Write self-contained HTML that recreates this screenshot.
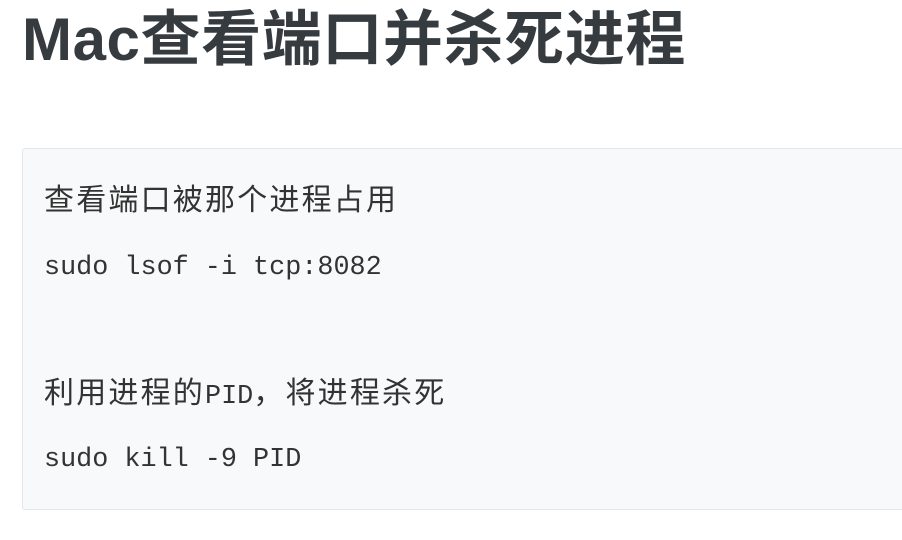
<!DOCTYPE html>
<html><head><meta charset="utf-8"><style>
body{margin:0;width:902px;height:540px;background:#fff;overflow:hidden;position:relative}
h1{position:absolute;left:22px;top:0;margin:0;font:bold 60px/80px "Liberation Sans","Noto Sans CJK SC",sans-serif;color:#363b40;white-space:nowrap;letter-spacing:0.6px}
.box{position:absolute;left:22px;top:148px;width:900px;height:360px;background:#f8f9fa;border:1px solid #e4e7ea;border-radius:3px}
.l{position:absolute;left:21px;font:26.8px/64px "Liberation Mono","Noto Sans CJK SC",monospace;color:#333;white-space:pre}
.c{font-size:30px;letter-spacing:2.2px}
</style></head><body>
<h1>Mac查看端口并杀死进程</h1>
<div class="box">
<div class="l" style="top:22px"><span class="c">查看端口被那个进程占用</span></div>
<div class="l" style="top:87px">sudo lsof -i tcp:8082</div>
<div class="l" style="top:215px"><span class="c">利用进程的</span>PID<span class="c">，将进程杀死</span></div>
<div class="l" style="top:279px">sudo kill -9 PID</div>
</div>
</body></html>
